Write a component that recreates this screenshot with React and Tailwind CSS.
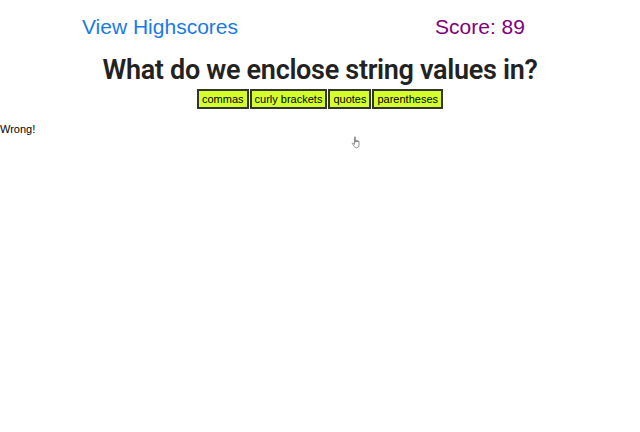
export default function App() {
  const answers = ["commas", "curly brackets", "quotes", "parentheses"];
  return (
    <div className="w-[640px] h-[432px] bg-white font-['Liberation_Sans',Arial,sans-serif] relative">
      <header className="grid grid-cols-2 text-center pt-[15px]">
        <a className="text-[21px] text-[#1a7ae6] leading-[24px]">View Highscores</a>
        <span className="text-[21px] text-[#800080] leading-[24px]">Score: 89</span>
      </header>
      <h1 className="text-center text-[27px] font-semibold text-[#222] leading-[32px] mt-[15px] font-['Roboto',sans-serif] tracking-[-0.3px]">
        What do we enclose string values in?
      </h1>
      <div className="flex justify-center gap-px mt-[3px]">
        {answers.map((a) => (
          <button
            key={a}
            className="bg-[#d4ff2a] border-2 border-[#333] text-[11px] text-black px-[3px] h-[20px] leading-none"
          >
            {a}
          </button>
        ))}
      </div>
      <p className="text-[11px] text-black mt-[15px] leading-none">Wrong!</p>
      <svg className="absolute left-[351px] top-[136px]" width="12" height="13" viewBox="0 0 12 13">
        <path
          d="M3.5 1.2c0-.6.9-.6.9 0V6h.3V4.6c0-.6.9-.6.9 0V6h.3V5c0-.6.9-.6.9 0v1h.3v-.6c0-.6.9-.6.9 0V9c0 1.6-1 2.8-2.6 2.8H5.5C4.3 11.8 3.8 11 3 10L1.4 7.8c-.4-.5.2-1 .7-.6L3.5 8.4z"
          fill="#fff"
          stroke="#777"
          strokeWidth="0.8"
          strokeLinejoin="round"
        />
      </svg>
    </div>
  );
}
